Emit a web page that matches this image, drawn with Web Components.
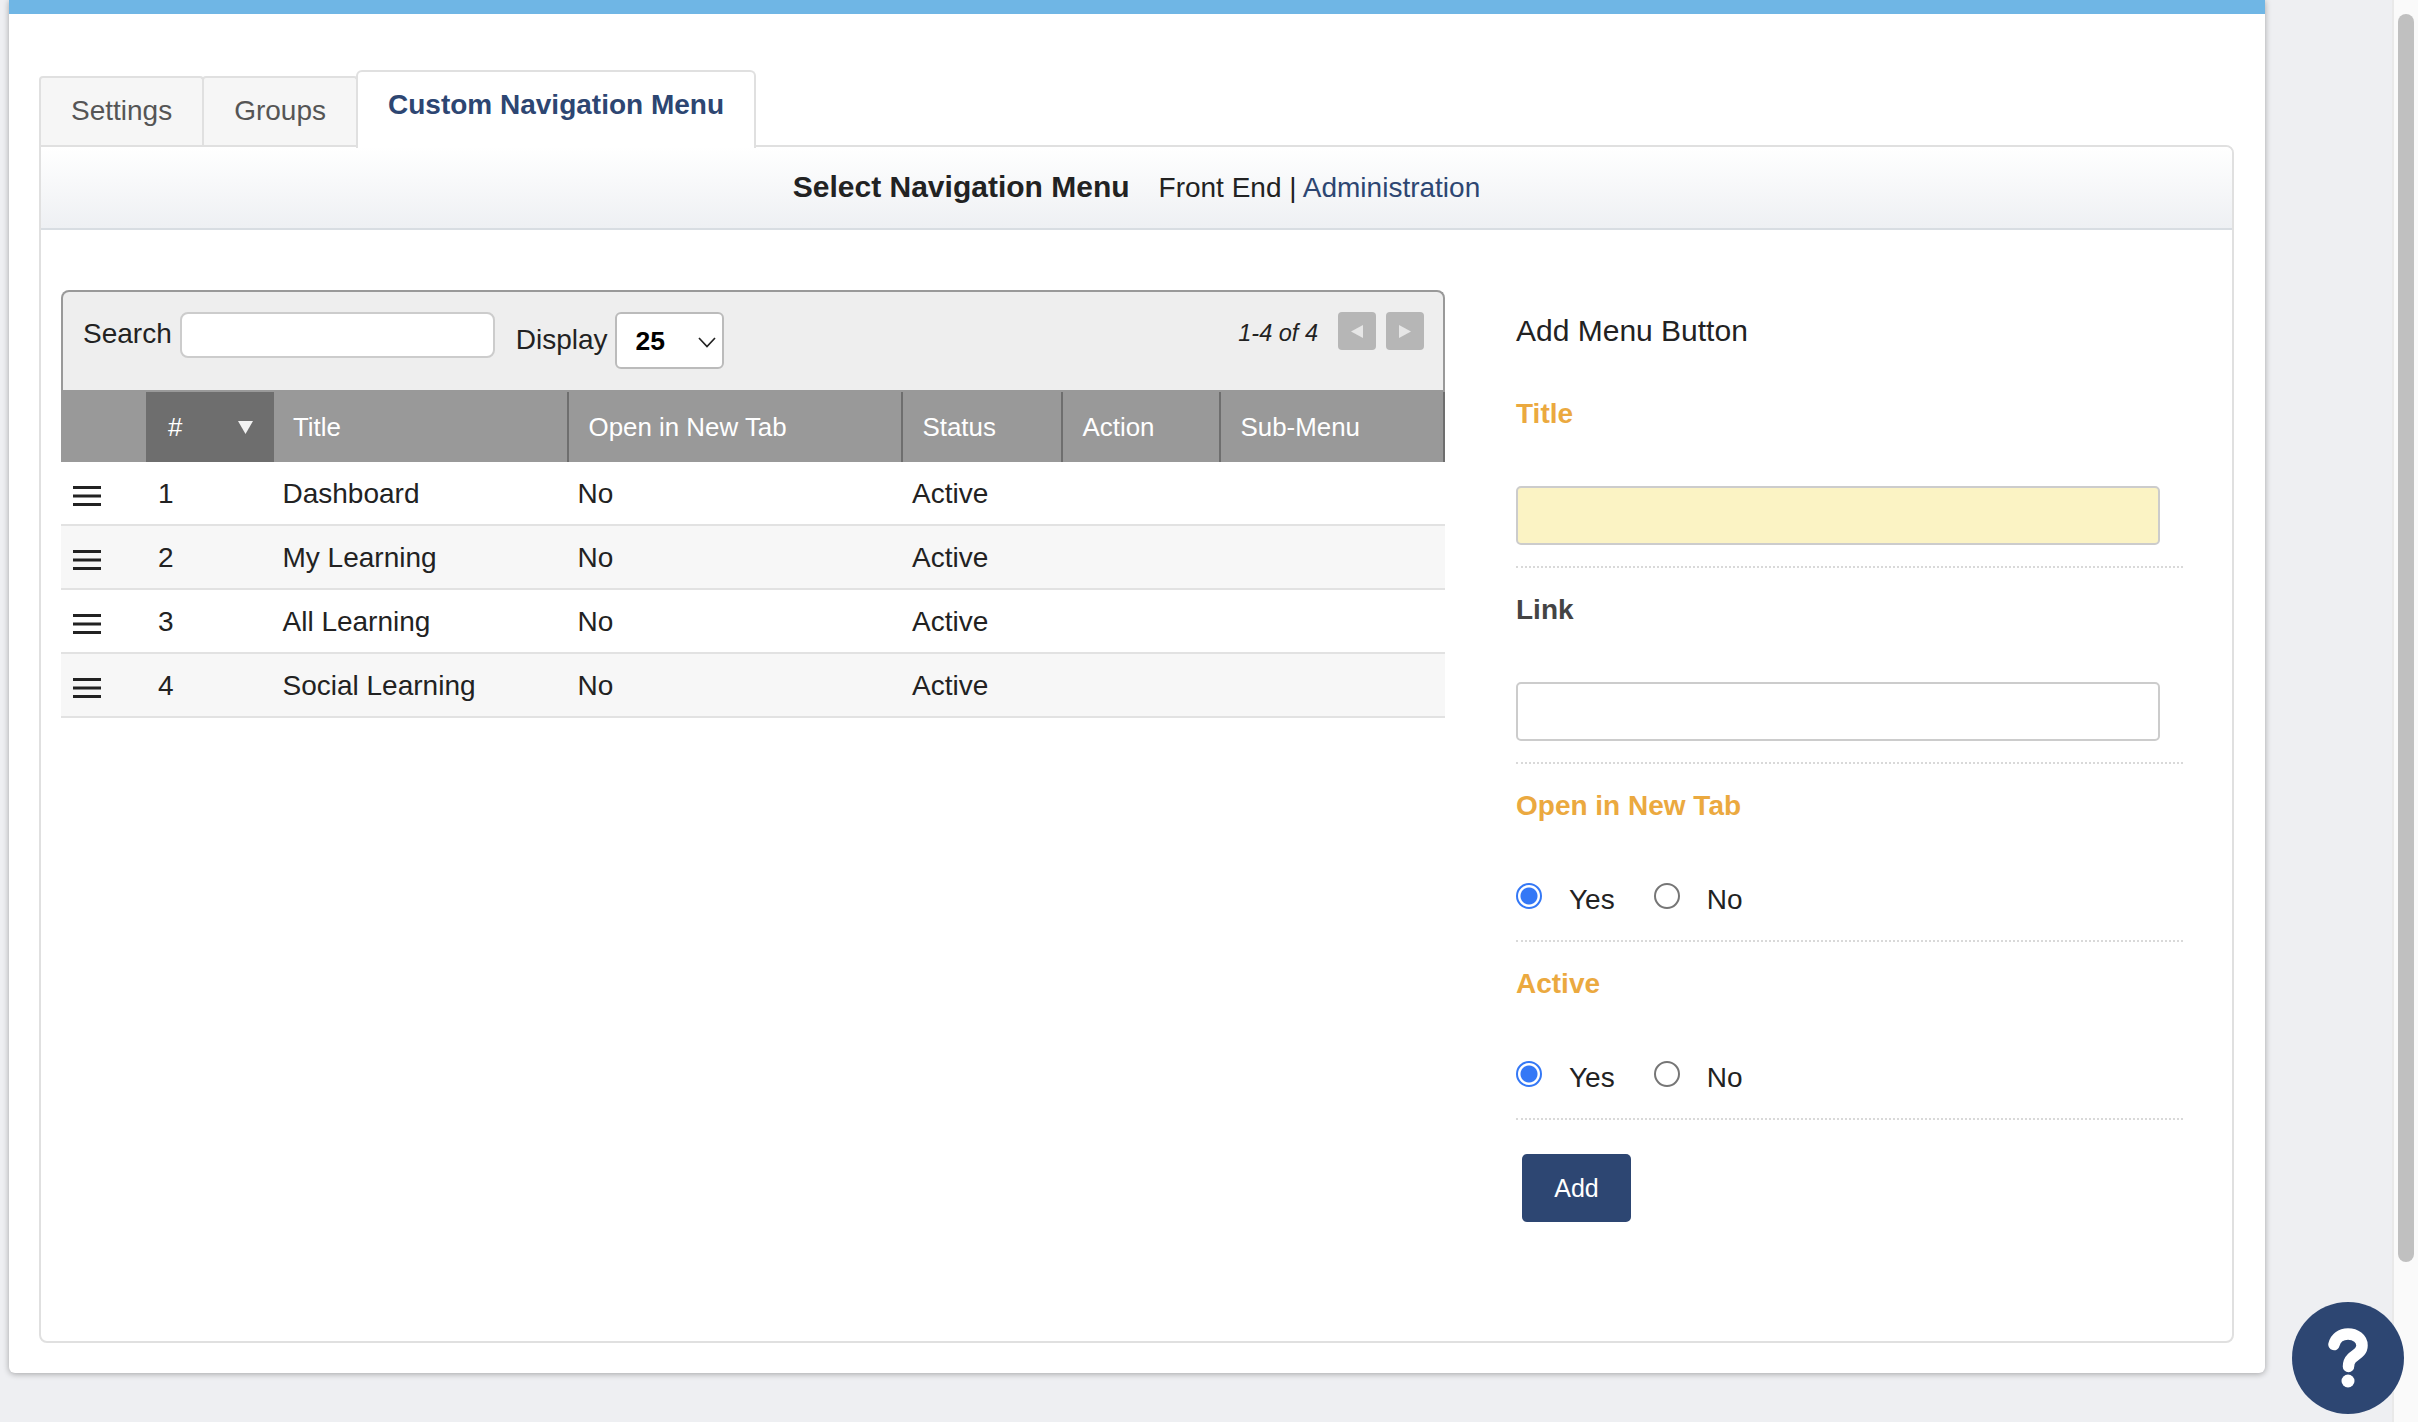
<!DOCTYPE html>
<html lang="en">
<head>
<meta charset="utf-8">
<title>Custom Navigation Menu</title>
<style>
  html, body { margin: 0; height: 100%; overflow: hidden; }
  body { background: #eeeff2; color: #222; font: 28px "Liberation Sans", Arial, sans-serif; }
</style>
</head>
<body>
<admin-shell>
  <tab-strip>
    <tab-item>Settings</tab-item>
    <tab-item>Groups</tab-item>
    <tab-item active>Custom Navigation Menu</tab-item>
  </tab-strip>
  <tab-card>
    <span slot="heading">Select Navigation Menu</span>
    <span slot="links">Front End | <a-link>Administration</a-link></span>
    <menu-grid slot="left">
      <menu-row num="1" name="Dashboard"></menu-row>
      <menu-row num="2" name="My Learning" alt></menu-row>
      <menu-row num="3" name="All Learning"></menu-row>
      <menu-row num="4" name="Social Learning" alt></menu-row>
    </menu-grid>
    <menu-form slot="right">
      <form-field label="Title" required><text-box tint></text-box></form-field>
      <form-field label="Link"><text-box></text-box></form-field>
      <form-field label="Open in New Tab" required><yes-no name="newtab"></yes-no></form-field>
      <form-field label="Active" required><yes-no name="active"></yes-no></form-field>
    </menu-form>
  </tab-card>
</admin-shell>

<script>
/* small helper so every element below reads the same */
function mount(el, html) {
  if (el.shadowRoot) return;
  el.attachShadow({ mode: 'open' }).innerHTML = html;
}

const NAVY = '#2d4672';
const ORANGE = '#eba93f';

class AdminShell extends HTMLElement {
  connectedCallback() {
    mount(this, `
      <style>
        :host { display: flex; height: 1422px; }
        .main { flex: 1; padding-left: 9px; }
        .panel {
          width: 2256px; height: 1373px; box-sizing: border-box; background: #fff;
          border-top: 14px solid #6fb6e5; padding: 56px 31px 30px 30px;
          border-radius: 0 0 6px 6px; display: flex; flex-direction: column;
          box-shadow: 0 1px 6px rgba(0,0,0,.32);
        }
        .track { width: 26px; box-sizing: border-box; background: #fafafa; border-left: 2px solid #e9e9e9; padding: 14px 4px 0 4px; }
        .thumb { height: 1248px; background: #c0c0c0; border-radius: 8px; }
        help-fab { position: absolute; left: 2292px; top: 1302px; }
      </style>
      <div class="main"><div class="panel"><slot></slot></div></div>
      <div class="track"><div class="thumb"></div></div>
      <help-fab></help-fab>`);
  }
}

class HelpFab extends HTMLElement {
  connectedCallback() {
    mount(this, `
      <style>
        :host { display: flex; width: 112px; height: 112px; border-radius: 50%; background: ${NAVY}; align-items: center; justify-content: center; }
        svg { display: block; }
      </style>
      <svg width="40" height="60" viewBox="0 0 40 60" aria-label="Help">
        <path d="M6 16.500C7.500 10 13 6 20 6C27.500 6 34 10.500 34 17.500C34 24.500 27.500 26.500 23.500 30.500C21.500 32.500 20.500 34.500 20.500 38.500" fill="none" stroke="#fff" stroke-width="11.500" stroke-linecap="round"/>
        <circle cx="20" cy="53" r="6.500" fill="#fff"/>
      </svg>`);
  }
}

class TabStrip extends HTMLElement {
  connectedCallback() {
    mount(this, `
      <style>
        :host { display: flex; align-items: flex-end; height: 78px; margin-bottom: -3px; position: relative; z-index: 1; }
      </style>
      <slot></slot>`);
  }
}

class TabItem extends HTMLElement {
  connectedCallback() {
    mount(this, `
      <style>
        :host {
          display: flex; box-sizing: border-box; height: 69px; padding: 0 30px 1px; margin: 0 -2px 3px 0; align-items: center;
          background: #f6f6f6; color: #555; border: 2px solid #e0e0e0; border-bottom: 0;
          border-radius: 4px 4px 0 0; font-size: 28px;
        }
        :host([active]) {
          height: 78px; margin: 0; background: #fff; color: ${NAVY}; font-weight: bold;
          padding: 0 30px 10px; border-radius: 6px 6px 0 0;
        }
      </style>
      <slot></slot>`);
  }
}

class ALink extends HTMLElement {
  connectedCallback() {
    mount(this, `<style>:host { display: inline; color: ${NAVY}; }</style><slot></slot>`);
  }
}

class TabCard extends HTMLElement {
  connectedCallback() {
    mount(this, `
      <style>
        :host { display: flex; flex-direction: column; flex: 1; box-sizing: border-box; border: 2px solid #e0e0e0; border-radius: 0 8px 8px 8px; }
        .bar {
          display: flex; justify-content: center; align-items: center; gap: 29px; height: 83px; box-sizing: border-box;
          border-bottom: 2px solid #d8dde2; border-radius: 0 6px 0 0; padding-bottom: 2px;
          background: linear-gradient(#fff, #eef0f3); color: #222;
        }
        .h { font-size: 30px; font-weight: bold; }
        .l { font-size: 28px; padding-top: 2px; }
        .body { display: flex; padding: 60px 0 0 20px; gap: 71px; }
        .left { width: 1384px; }
        .right { width: 667px; }
      </style>
      <div class="bar">
        <div class="h"><slot name="heading"></slot></div>
        <div class="l"><slot name="links"></slot></div>
      </div>
      <div class="body">
        <div class="left"><slot name="left"></slot></div>
        <div class="right"><slot name="right"></slot></div>
      </div>`);
  }
}

class MenuGrid extends HTMLElement {
  connectedCallback() {
    const heads = ['', '#', 'Title', 'Open in New Tab', 'Status', 'Action', 'Sub-Menu'];
    mount(this, `
      <style>
        :host { display: block; }
        .tools {
          display: flex; align-items: flex-start; height: 100px; box-sizing: border-box; background: #eee;
          border: 2px solid #999; border-bottom: 0; border-radius: 8px 8px 0 0; padding: 20px 19px 0 20px;
          font-size: 28px; color: #222;
        }
        .lbl { height: 46px; line-height: 44px; }
        .search {
          width: 315px; height: 46px; box-sizing: border-box; margin: 0 21px 0 8px; background: #fff;
          border: 2px solid #ccc; border-radius: 8px; padding: 0 8px; font: inherit; outline: 0;
        }
        .disp { height: 57px; line-height: 56px; margin-right: 7px; }
        .sel { position: relative; width: 109px; height: 57px; }
        select {
          appearance: none; -webkit-appearance: none; width: 100%; height: 100%; box-sizing: border-box;
          background: #fff; border: 2px solid #bbb; border-radius: 6px; padding: 0 0 0 19px; color: #000;
          font: bold 26.500px "Liberation Sans", Arial, sans-serif; outline: 0;
        }
        .sel svg { position: absolute; left: 83px; top: 25px; pointer-events: none; }
        .pager { margin-left: auto; display: flex; align-items: flex-start; }
        .count { font-size: 23.500px; font-style: italic; line-height: 42px; margin-right: 20px; }
        .pg { width: 38px; height: 38px; background: #b6b6b6; border-radius: 4px; display: flex; align-items: center; justify-content: center; }
        .pg + .pg { margin-left: 10px; }
        .head {
          display: grid; grid-template-columns: 85px 128px 293px 334px 160px 158px 226px; height: 72px; box-sizing: border-box;
          background: #999; padding-top: 2px; color: #fff; font-size: 25.900px;
        }
        .head div { display: flex; align-items: center; box-sizing: border-box; }
        .head div:nth-child(2) { background: #6e6e6e; padding: 0 21px 0 22px; justify-content: space-between; }
        .head div:nth-child(3) { padding-left: 19px; }
        .head div:nth-child(n+4) { padding-left: 19.500px; border-left: 2px solid #6e6e6e; }
        .head div:last-child { border-right: 2px solid #6e6e6e; }
      </style>
      <div class="tools">
        <span class="lbl">Search</span>
        <input class="search" type="text" aria-label="Search">
        <span class="disp">Display</span>
        <div class="sel">
          <select aria-label="Display"><option>25</option><option>50</option></select>
          <svg width="18" height="11" viewBox="0 0 18 11"><path d="M1 1l8 8.500 8-8.500" fill="none" stroke="#222" stroke-width="1.700"/></svg>
        </div>
        <div class="pager">
          <span class="count">1-4 of 4</span>
          <div class="pg"><svg width="12" height="13" viewBox="0 0 12 13"><path d="M12 0v13L0 6.500z" fill="#e6e6e6"/></svg></div>
          <div class="pg"><svg width="12" height="13" viewBox="0 0 12 13"><path d="M0 0v13l12-6.500z" fill="#e6e6e6"/></svg></div>
        </div>
      </div>
      <div class="head">
        ${heads.map((h, i) => i === 1
          ? `<div><span>${h}</span><svg width="15" height="13" viewBox="0 0 15 13"><path d="M0 0h15L7.500 13z" fill="#f2f2f2"/></svg></div>`
          : `<div>${h}</div>`).join('')}
      </div>
      <slot></slot>`);
  }
}

class MenuRow extends HTMLElement {
  connectedCallback() {
    const a = n => this.getAttribute(n);
    mount(this, `
      <style>
        :host {
          display: grid; grid-template-columns: 85px 124.500px 295px 334.500px 1fr; height: 64px; box-sizing: border-box;
          padding-left: 12px; border-bottom: 2px solid #e2e2e2; align-items: center; background: #fff; color: #222; font-size: 28px;
        }
        :host([alt]) { background: #f7f7f7; }
        div { padding-top: 2px; }
        svg { display: block; margin-top: 6px; }
      </style>
      <svg width="28" height="20" viewBox="0 0 28 20" aria-label="Drag"><path d="M0 0h28v3H0zM0 8.500h28v3H0zM0 17h28v3H0z" fill="#222"/></svg>
      <div>${a('num')}</div>
      <div>${a('name')}</div>
      <div>No</div>
      <div>Active</div>`);
  }
}

class MenuForm extends HTMLElement {
  connectedCallback() {
    mount(this, `
      <style>
        :host { display: block; color: #222; }
        h3 { margin: 0; height: 82px; line-height: 82px; font-size: 30px; font-weight: normal; }
        button {
          display: block; width: 109px; height: 68px; margin: 34px 0 0 6px; border: 0; border-radius: 5px;
          background: ${NAVY}; color: #fff; font: 25px "Liberation Sans", Arial, sans-serif;
        }
      </style>
      <h3>Add Menu Button</h3>
      <slot></slot>
      <button type="button">Add</button>`);
  }
}

class FormField extends HTMLElement {
  connectedCallback() {
    mount(this, `
      <style>
        :host { display: block; padding-top: 23px; border-bottom: 2px dotted #d9d9d9; }
        .label { height: 36px; line-height: 38px; margin-bottom: 55px; font-weight: bold; font-size: 28px; color: #444; }
        :host([required]) .label { color: ${ORANGE}; }
      </style>
      <div class="label">${this.getAttribute('label')}</div>
      <slot></slot>`);
  }
}

class TextBox extends HTMLElement {
  connectedCallback() {
    mount(this, `
      <style>
        :host { display: block; padding-bottom: 21px; }
        input {
          display: block; width: 644px; height: 59px; box-sizing: border-box; background: #fff;
          border: 2px solid #ccc; border-radius: 5px; outline: 0; font: inherit;
        }
        :host([tint]) input { background: #fbf3c4; }
      </style>
      <input type="text">`);
  }
}

class YesNo extends HTMLElement {
  connectedCallback() {
    const n = this.getAttribute('name');
    mount(this, `
      <style>
        :host { display: flex; align-items: center; height: 36px; padding: 3px 0 23px; font-size: 28px; color: #222; }
        input {
          appearance: none; -webkit-appearance: none; width: 26px; height: 26px; margin: 0 27px 6px 0; box-sizing: border-box;
          border: 2px solid #767676; border-radius: 50%; background: #fff;
        }
        input:checked { border-color: #3478f6; background: radial-gradient(circle, #3478f6 0 8px, #fff 9px); }
        span { margin-right: 39px; padding-top: 1px; }
      </style>
      <input type="radio" name="${n}" checked aria-label="Yes"><span>Yes</span>
      <input type="radio" name="${n}" aria-label="No"><span>No</span>`);
  }
}

customElements.define('a-link', ALink);
customElements.define('help-fab', HelpFab);
customElements.define('admin-shell', AdminShell);
customElements.define('tab-strip', TabStrip);
customElements.define('tab-item', TabItem);
customElements.define('tab-card', TabCard);
customElements.define('menu-row', MenuRow);
customElements.define('menu-grid', MenuGrid);
customElements.define('menu-form', MenuForm);
customElements.define('form-field', FormField);
customElements.define('text-box', TextBox);
customElements.define('yes-no', YesNo);
</script>
</body>
</html>
